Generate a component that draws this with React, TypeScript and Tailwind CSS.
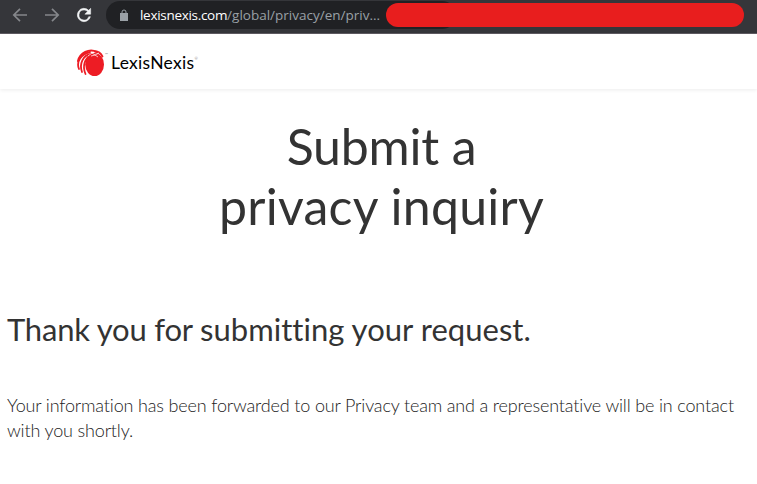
const BackIcon = ({ flip = false }: { flip?: boolean }) => (
  <svg viewBox="0 0 16 16" className={flip ? 'size-4 rotate-180' : 'size-4'} fill="none" stroke="#85878b" strokeWidth="1.7">
    <path d="M15 8H2M8 1.8 1.8 8 8 14.2" />
  </svg>
);

const BrowserBar = () => (
  <div className="flex h-[34px] items-start border-b border-[#5f5b62] bg-[#35363a]">
    <div className="flex h-[30px] items-center gap-4 pl-3">
      <BackIcon />
      <BackIcon flip />
      <svg viewBox="0 0 24 24" className="-ml-0.5 size-5" fill="#f1f3f4" stroke="#f1f3f4" strokeWidth="0.6">
        <path d="M17.65 6.35A8 8 0 1 0 19.73 14h-2.08A6 6 0 1 1 12 6c1.66 0 3.14.69 4.22 1.78L13 11h7V4z" />
      </svg>
    </div>
    <div className="relative ml-3 mt-px h-7 flex-1">
      <div className="flex h-7 w-[350px] items-center rounded-full bg-[#202124] pl-[13px]">
        <svg viewBox="0 0 10 12" className="h-3 w-2.5" fill="#9aa0a6">
          <path d="M1 4h8v8H1z" />
          <path d="M3 5V3a2 2 0 0 1 4 0v2" fill="none" stroke="#9aa0a6" />
        </svg>
        <span className="ml-[11px] whitespace-nowrap font-['Open_Sans',sans-serif] text-[13.5px] text-[#9aa0a6]">
          <span className="tracking-[-0.3px] text-white">lexisnexis.com</span>
          <span>/global/privacy/en/priv...</span>
        </span>
      </div>
      <div className="absolute left-[280px] top-0.5 h-6 w-[358px] rounded-full bg-[#e81e1e]" />
    </div>
  </div>
);

const Logo = () => (
  <div className="flex items-center">
    <svg viewBox="0 0 28 28" className="size-7">
      <ellipse cx="17.6" cy="15.5" rx="9.4" ry="11.5" fill="#ed1c24" />
      <g fill="none" stroke="#ed1c24" strokeLinecap="round">
        <path d="M20 3C12-1 3 4 1 12" strokeWidth="2" />
        <path d="M13 3C4 5-1 13 2 20" strokeWidth="1.8" />
        <path d="M14 5C6 6 2 15 5 23" strokeWidth="1.8" />
        <path d="M14 6C8 9 5 17 8.5 25" strokeWidth="1.8" />
        <path d="M18 2.5c4 0 6 2 7.5 5" strokeWidth="1.8" />
      </g>
      <path d="m11 7 4-3 3 2 4-2M14 7l4-1 3 2" fill="none" stroke="#fff" strokeWidth="0.7" />
    </svg>
    <span className="-mt-4 text-[4px] text-[#888]">™</span>
    <span className="ml-[3px] mt-0.5 text-[17.5px] tracking-[0.3px] text-black">LexisNexis</span>
    <span className="-mt-2 text-[4px] text-[#888]">®</span>
  </div>
);

const App = () => {
  return (
    <div className="h-[484px] overflow-hidden bg-white font-['Lato',sans-serif] text-[#333]">
      <BrowserBar />
      <header className="flex h-[55px] items-center pl-[77px] pt-0.5 shadow-[0_1px_4px_rgba(0,0,0,0.08)]">
        <Logo />
      </header>
      <main>
        <h1 className="mt-[27px] pl-1.5 text-center text-[50px] leading-[60px]">
          <span className="tracking-[-0.2px]">Submit a</span>
          <br />
          <span className="tracking-[0.25px]">privacy inquiry</span>
        </h1>
        <h2 className="mt-[73px] pl-[7px] text-[31px] leading-10">
          <span className="tracking-[-0.2px]">Thank you for </span>
          <span className="tracking-[0.03px]">submitting your request.</span>
        </h2>
        <p className="mt-11 whitespace-nowrap pl-[7px] text-lg font-light leading-[25px] tracking-[-0.155px] text-[#222]">
          Your information has been forwarded to our Privacy team and a representative will be in contact
          <br />
          with you shortly.
        </p>
      </main>
    </div>
  );
};

export default App;
